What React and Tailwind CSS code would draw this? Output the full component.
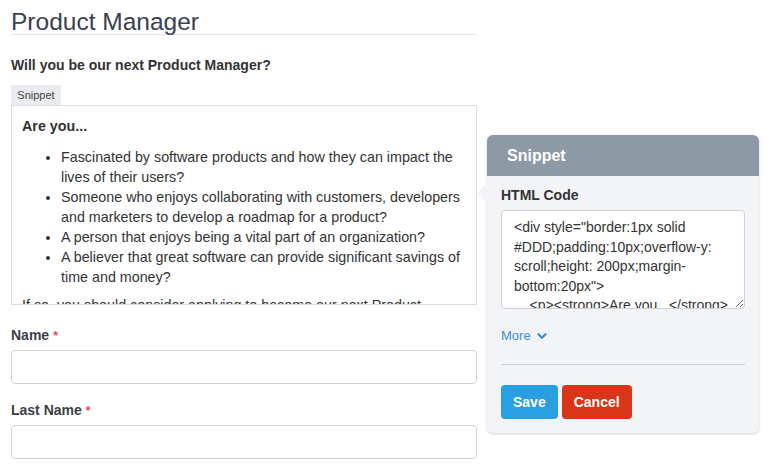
import { ChevronDown } from 'lucide-react';

const items = [
  'Fascinated by software products and how they can impact the lives of their users?',
  'Someone who enjoys collaborating with customers, developers and marketers to develop a roadmap for a product?',
  'A person that enjoys being a vital part of an organization?',
  'A believer that great software can provide significant savings of time and money?',
];

const code = `<div style="border:1px solid #DDD;padding:10px;overflow-y: scroll;height: 200px;margin-bottom:20px">
    <p><strong>Are you...</strong></p>
    <ul>
        <li>Fascinated by software products and how they can impact the lives of their users?</li>
    </ul>
</div>`;

const Field = ({ label }) => (
  <div>
    <label className="block text-[14px] leading-[20px] font-bold text-[#3a3f48]">
      {label}
      <span className="ml-[4px] text-[#e8455d] text-[12px]">*</span>
    </label>
    <input
      type="text"
      className="mt-[4px] block w-full h-[34px] rounded-[4px] border border-[#cdd1d8] bg-white"
    />
  </div>
);

const App = () => {
  return (
    <div className="relative w-[771px] h-[468px] overflow-hidden bg-white font-['Liberation_Sans',Arial,sans-serif] text-[#333]">
      <div className="ml-[11px] w-[466px]">
        {/* Title */}
        <h1 className="mt-[9px] text-[24.5px] leading-[25px] font-normal text-[#3b414f] border-b border-[#e3e5e8]">
          Product Manager
        </h1>

        <p className="mt-[20px] text-[14px] leading-[20px] font-bold text-[#333]">
          Will you be our next Product Manager?
        </p>

        {/* Snippet tab + box */}
        <div className="mt-[10px]">
          <div className="w-[50px] h-[20px] bg-[#e9ecf0] text-center text-[11px] leading-[21px] text-[#444]">
            Snippet
          </div>
          <div className="h-[200px] overflow-hidden border border-[#ddd] p-[10px] text-[14.3px] leading-[20px] text-[#333]">
            <p className="font-bold">Are you...</p>
            <ul className="mt-[11px] pl-[39px] list-disc">
              {items.map((t) => (
                <li key={t}>{t}</li>
              ))}
            </ul>
            <p className="mt-[8px]">
              If so, you should consider applying to become our next Product Manager.
            </p>
          </div>
        </div>

        {/* Form fields */}
        <div className="mt-[20px] flex flex-col gap-[16px]">
          <Field label="Name" />
          <Field label="Last Name" />
        </div>
      </div>

      {/* Snippet popover */}
      <div className="absolute left-[487px] top-[135px] w-[272px] rounded-[6px] bg-[#f3f4f7] shadow-[0_1px_3px_rgba(0,0,0,0.18)]">
        <div className="absolute left-[-9px] top-[47px] w-0 h-0 border-y-[11px] border-y-transparent border-r-[9px] border-r-[#f3f4f7]" />
        <div className="h-[41px] rounded-t-[6px] bg-[#8e99a6] px-[20px] flex items-center text-[16px] font-bold text-white">
          Snippet
        </div>
        <div className="px-[14px] pt-[9px] pb-[14px]">
          <p className="text-[14px] leading-[20px] font-bold text-[#333]">HTML Code</p>
          <textarea
            readOnly
            value={code}
            className="mt-[5px] block w-full h-[99px] overflow-hidden resize-y rounded-[4px] border border-[#cdd1d8] bg-white px-[12px] py-[7px] text-[14px] leading-[19.5px] text-[#333]"
          />
          <a href="#" className="mt-[17px] inline-flex items-center gap-[4px] text-[13px] leading-[20px] text-[#3c8fdb]">
            More <ChevronDown size={14} strokeWidth={4} />
          </a>
          <div className="mt-[17px] border-t border-[#cdd1d8]" />
          <div className="mt-[20px] flex gap-[4px]">
            <button className="h-[34px] px-[12px] rounded-[4px] bg-[#279fe1] text-white text-[14px] font-bold">
              Save
            </button>
            <button className="h-[34px] px-[12px] rounded-[4px] bg-[#d93518] text-white text-[14px] font-bold">
              Cancel
            </button>
          </div>
        </div>
      </div>
    </div>
  );
};

export default App;
